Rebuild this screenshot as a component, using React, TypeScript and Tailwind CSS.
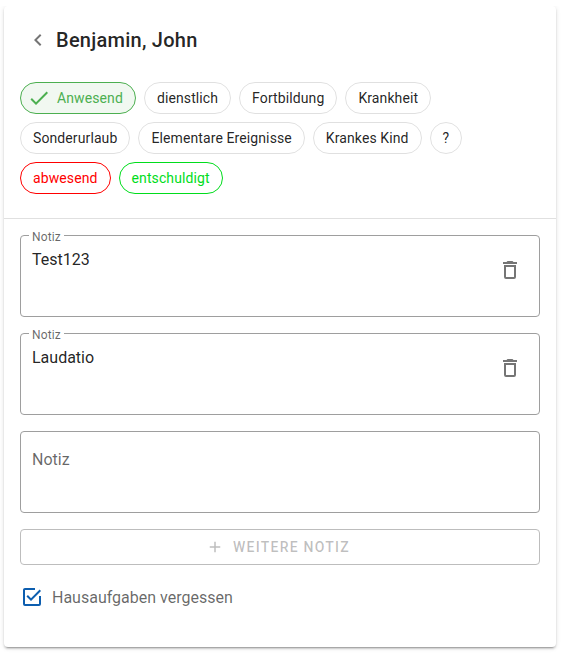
import { useState } from "react";
import clsx from "clsx";

const icons = {
  back: "M15.41,16.58L10.83,12L15.41,7.41L14,6L8,12L14,18L15.41,16.58Z",
  check: "M21,7L9,19L3.5,13.5L4.91,12.09L9,16.17L19.59,5.59L21,7Z",
  trash:
    "M6,19A2,2 0 0,0 8,21H16A2,2 0 0,0 18,19V7H6V19M8,9H16V19H8V9M15.5,4L14.5,3H9.5L8.5,4H5V6H19V4H15.5Z",
  plus: "M19,13H13V19H11V13H5V11H11V5H13V11H19V13Z",
  checkbox:
    "M19,19H5V5H15V3H5C3.89,3 3,3.89 3,5V19A2,2 0 0,0 5,21H19A2,2 0 0,0 21,19V11H19M7.91,10.08L6.5,11.5L11,16L21,6L19.59,4.58L11,13.17L7.91,10.08Z",
  checkboxBlank:
    "M19,3H5C3.89,3 3,3.89 3,5V19A2,2 0 0,0 5,21H19A2,2 0 0,0 21,19V5C21,3.89 20.1,3 19,3M19,5V19H5V5H19Z",
};

const states = [
  { label: "Anwesend" },
  { label: "dienstlich" },
  { label: "Fortbildung" },
  { label: "Krankheit" },
  { label: "Sonderurlaub" },
  { label: "Elementare Ereignisse" },
  { label: "Krankes Kind" },
  { label: "?" },
  { label: "abwesend", color: "border-[#ff0000] text-[#ff0000]" },
  { label: "entschuldigt", color: "border-[#00dd1c] text-[#00dd1c]" },
];

function Icon({ path, className = "size-6" }: { path: string; className?: string }) {
  return (
    <svg viewBox="0 0 24 24" fill="currentColor" className={clsx("shrink-0", className)}>
      <path d={path} />
    </svg>
  );
}

function Note({ text }: { text?: string }) {
  return (
    <fieldset className="relative h-[82px] rounded border border-[#9e9e9e]">
      {text ? (
        <>
          <span className="absolute -top-[6px] left-[8px] w-[35px] bg-white pl-[3px] text-xs leading-[14px] tracking-[0.01em] text-black/60">
            Notiz
          </span>
          <div className="flex justify-between pr-[17px] pl-[11px]">
            <p className="pt-[10px] text-base leading-7 text-black/87">{text}</p>
            <button className="mt-[22px] text-black/54">
              <Icon path={icons.trash} />
            </button>
          </div>
        </>
      ) : (
        <p className="pt-[18px] pl-[11px] text-base leading-5 text-black/60">Notiz</p>
      )}
    </fieldset>
  );
}

export default function App() {
  const [selected, setSelected] = useState("Anwesend");
  const [forgotten, setForgotten] = useState(true);

  return (
    <div className="h-[660px] overflow-hidden bg-white px-1 pt-1.5 font-[Roboto,sans-serif]">
      <div className="h-[641px] w-[552px] rounded bg-white shadow-[0_3px_1px_-2px_rgba(0,0,0,0.2),0_2px_2px_0_rgba(0,0,0,0.14),0_1px_5px_0_rgba(0,0,0,0.12)] [clip-path:inset(0_-8px_-10px_-8px)]">
        <div className="flex h-[76px] items-start gap-1.5 pt-[18px] pl-[22px]">
          <button className="pt-1 text-black/54">
            <Icon path={icons.back} />
          </button>
          <h1 className="text-xl leading-8 font-medium tracking-[0.0125em] text-black/87">
            Benjamin, John
          </h1>
        </div>

        <div className="flex h-[136px] w-[480px] flex-wrap content-start gap-2 pl-4">
          {states.map(({ label, color }) => {
            const active = label === selected;
            return (
              <button
                key={label}
                onClick={() => setSelected(label)}
                className={clsx(
                  "flex h-8 items-center rounded-full border px-3 text-sm leading-5 tracking-[0.0075em] whitespace-nowrap",
                  active
                    ? "border-[#4caf50] bg-[#f1f8f1] text-[#4caf50]"
                    : color ?? "border-black/12 text-black/87"
                )}
              >
                {active && <Icon path={icons.check} className="mr-1.5 -ml-1.5 size-6" />}
                {label}
              </button>
            );
          })}
        </div>

        <hr className="border-black/12" />

        <div className="flex flex-col gap-4 p-4">
          <Note text="Test123" />
          <Note text="Laudatio" />
          <Note />
          <button
            disabled
            className="flex h-9 items-center justify-center rounded border border-[#bdbdbd] text-sm font-medium tracking-[0.0892857143em] text-black/26 uppercase"
          >
            <Icon path={icons.plus} className="mr-[9px] -ml-1 size-[18px]" />
            Weitere Notiz
          </button>
          <button
            onClick={() => setForgotten(!forgotten)}
            className="mt-1 flex h-6 items-center gap-2 text-base leading-5 text-black/60"
          >
            <Icon
              path={forgotten ? icons.checkbox : icons.checkboxBlank}
              className="size-6 text-[#0d5eaf]"
            />
            <span className="pt-0.5">Hausaufgaben vergessen</span>
          </button>
        </div>
      </div>
    </div>
  );
}
